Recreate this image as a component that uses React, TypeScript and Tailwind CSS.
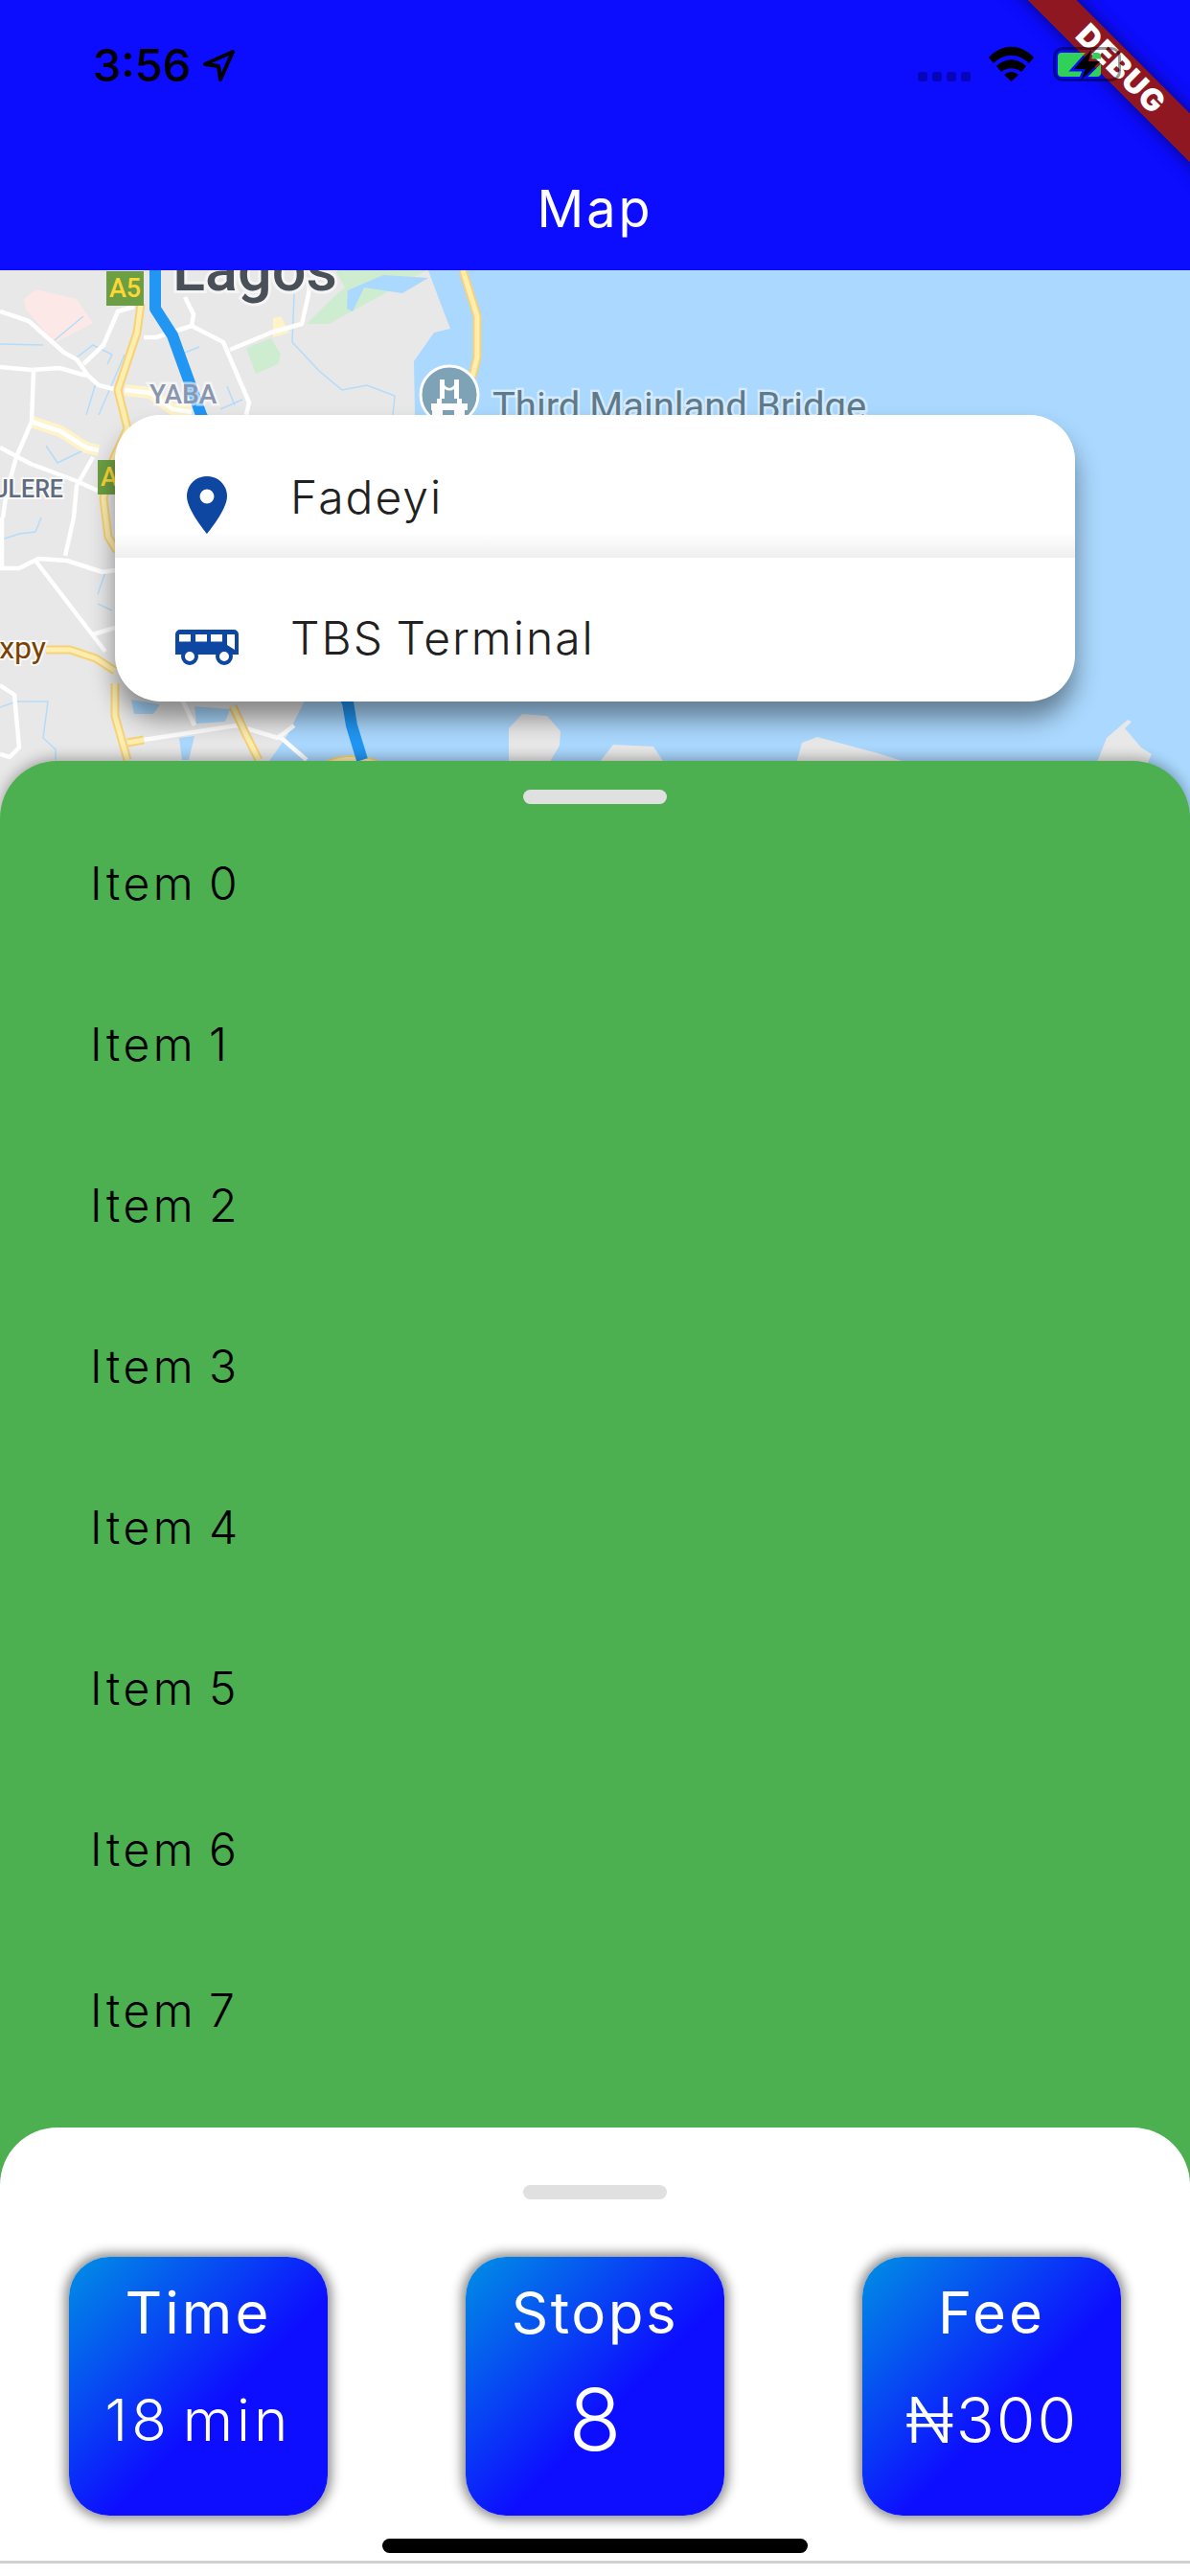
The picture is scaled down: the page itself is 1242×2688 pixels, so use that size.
import React from "react";

const font = "font-['Inter','Liberation_Sans',sans-serif]";

const whiteRoads = [
  "M0 325 L30 335 L67 368 L80 375 L92 392 L103 402 L123 407",
  "M0 383 L33 386 L62 384 L90 392",
  "M35 387 L33 440 L17 477 L7 513 L3 540",
  "M0 467 L32 484 L80 502 L102 512",
  "M87 380 L108 360 L123 325 L140 320",
  "M150 352 L163 352 L200 340 L233 357 L260 420 L257 433",
  "M200 340 L202 328 L193 310",
  "M240 365 L283 347 L315 338 L322 307 L323 293",
  "M97 477 L80 507 L77 540 L68 580",
  "M0 593 L20 593 L40 583 L70 585 L107 597 L120 595",
  "M37 585 L110 680",
  "M97 662 L120 655",
  "M0 715 L15 725 L20 780 L10 790 L0 787",
  "M150 772 L247 757 L290 770 L307 757",
  "M290 767 L320 793",
  "M190 730 L203 757",
  "M2 540 L2 593",
];

const streams = [
  "M307 307 L305 357 L333 387 L357 407 L383 402 L412 413 L410 433",
  "M57 355 L87 330",
  "M0 359 L45 360",
  "M90 433 L100 400",
  "M103 433 L130 370",
  "M80 373 L97 360 L117 370 L112 380",
  "M48 465 L60 483 L87 470",
  "M230 427 L253 417",
  "M237 403 L245 423",
  "M193 368 L208 362",
  "M2 563 L20 557 L37 555 L43 540",
  "M102 620 L110 597",
  "M102 630 L117 637",
  "M0 738 L17 732 L50 732 L45 770 L58 782 L58 793",
];

const yellowRoads = [
  "M147 317 L143 347 L123 407 L133 447 L118 480 L108 520 L113 560 L122 575",
  "M120 713 L120 747 L133 793",
  "M48 678 L73 678 L100 687 L120 700",
  "M243 737 L257 767 L270 793",
  "M133 775 L150 772",
  "M343 797 Q365 788 393 797",
  "M483 282 L498 330 L498 373 L493 393",
];

const MapBackground = () => (
  <svg viewBox="0 282 1242 572" className="absolute inset-0 w-full h-full">
    <rect x="0" y="282" width="1242" height="572" fill="#e8e8e8" />
    <path d="M350 282 L445 282 L400 307 L343 338 L320 338 L345 313 L360 300 Z" fill="#cdecd0" />
    <path d="M257 363 L283 353 L293 370 L290 380 L267 390 Z" fill="#cdecd0" />
    <path d="M25 312 L38 302 L80 312 L97 337 L57 358 L27 323 Z" fill="#fce8e6" />
    <path d="M285 332 L293 330 L302 347 L285 352 Z" fill="#fff4c8" />
    <path d="M363 303 L400 287 L447 290 L420 306 L380 300 L368 325 L362 322 Z" fill="#aad8fe" />
    <path d="M447 282 L460 317 L470 343 L453 347 L432 377 L433 433 L420 600 L317 733 L300 767 L277 800 L277 854 L1242 854 L1242 282 Z" fill="#aad8fe" />
    <path d="M137 730 L167 735 L160 745 L140 745 Z M203 737 L240 740 L235 753 L205 755 Z M187 770 L203 768 L197 793 L190 793 Z" fill="#aad8fe" />
    <path d="M531 800 L531 760 L545 745 L571 747 L585 763 L584 778 L571 800 Z" fill="#e8e8e8" />
    <path d="M622 800 L640 777 L682 779 L696 800 Z" fill="#e8e8e8" />
    <path d="M830 800 L837 775 L853 769 L916 786 L961 800 Z" fill="#e8e8e8" />
    <path d="M1143 800 L1155 770 L1177 751 L1181 753 L1174 760 L1191 780 L1202 787 L1196 800 Z" fill="#e8e8e8" />
    <g fill="none" stroke="#b3dcfc" strokeWidth="1.500">
      {streams.map((d) => <path key={d} d={d} />)}
    </g>
    <g fill="none" stroke="#fff4c8" strokeWidth="12" strokeLinejoin="round">
      <path d="M130 407 L157 410 L180 427 L200 430" />
      <path d="M33 440 L63 450 L90 467 L103 470" />
    </g>
    <g fill="none" stroke="#ffffff" strokeWidth="4.500" strokeLinejoin="round">
      {whiteRoads.map((d) => <path key={d} d={d} />)}
      <path d="M130 407 L157 410 L180 427 L200 430" />
      <path d="M33 440 L63 450 L90 467 L103 470" />
    </g>
    <g fill="none" stroke="#f6d27a" strokeWidth="9" strokeLinejoin="round">
      {yellowRoads.map((d) => <path key={d} d={d} />)}
    </g>
    <g fill="none" stroke="#feeeae" strokeWidth="5" strokeLinejoin="round">
      {yellowRoads.map((d) => <path key={d} d={d} />)}
    </g>
    <path d="M162 282 L162 322 L180 350 L210 433 L363 733 L367 757 L378 793" fill="none" stroke="#2196f3" strokeWidth="12" strokeLinejoin="round" />
    <rect x="111" y="283" width="39" height="36" fill="#6c9f43" />
    <text x="130.500" y="310" textAnchor="middle" fontSize="27" fontWeight="500" fill="#fdd835" fontFamily="Roboto, sans-serif">A5</text>
    <rect x="102" y="480" width="18" height="36" fill="#6c9f43" />
    <text x="105" y="507" fontSize="27" fontWeight="500" fill="#fdd835" fontFamily="Roboto, sans-serif">A</text>
    <text x="180" y="303" fontSize="63" fontWeight="500" fill="#4a5058" stroke="#f5f5f5" strokeWidth="6" paintOrder="stroke" fontFamily="Roboto, sans-serif">Lagos</text>
    <text x="156" y="421" fontSize="28" fontWeight="500" fill="#8a96ae" stroke="#ffffff" strokeOpacity="0.6" strokeWidth="5" paintOrder="stroke" fontFamily="Roboto, sans-serif">YABA</text>
    <text x="66" y="519" textAnchor="end" fontSize="25" fontWeight="500" fill="#5f6b7e" stroke="#ffffff" strokeOpacity="0.8" strokeWidth="4" paintOrder="stroke" fontFamily="Roboto, sans-serif">ULERE</text>
    <text x="48" y="687" textAnchor="end" fontSize="32" fill="#7b3f00" stroke="#ffffff" strokeOpacity="0.8" strokeWidth="4" paintOrder="stroke" fontFamily="Roboto, sans-serif">Expy</text>
    <circle cx="469" cy="412" r="30" fill="#7ea3b7" stroke="#ffffff" strokeWidth="3" />
    <path d="M450 421 h6 v-5 h5 v5 h16 v-5 h5 v5 h6 v7 h-3 v7 h-11 v-7 h-12 v7 h-11 v-7 h-1 Z M459 396 h5 v6 q5 6 10 0 v-6 h5 v20 h-5 v-10 q-5 3 -10 0 v10 h-5 Z" fill="#ffffff" />
    <text x="514" y="438" fontSize="40" fill="#5f7a8a" stroke="#ffffff" strokeOpacity="0.5" strokeWidth="5" paintOrder="stroke" fontFamily="Roboto, sans-serif">Third Mainland Bridge</text>
  </svg>
);

const PinIcon = () => (
  <svg width="42" height="60" viewBox="0 0 42 60" className="block">
    <path fillRule="evenodd" d="M21 0C9 0 0 9 0 21c0 14 21 39 21 39s21-25 21-39C42 9 33 0 21 0Zm0 13.500a7.500 7.500 0 1 1 0 15 7.500 7.500 0 0 1 0-15Z" fill="#0d47a1" />
  </svg>
);

const BusIcon = () => (
  <svg width="66" height="37" viewBox="0 0 66 37" className="block">
    <path fillRule="evenodd" d="M5 0h56a5 5 0 0 1 5 5v21H0V5a5 5 0 0 1 5-5Zm-1 5v7.500h12V5Zm17 0v7.500h12V5Zm16 0v7.500h12V5Zm17 0v11l8 5V5Z" fill="#0d47a1" />
    <circle cx="15" cy="28" r="7" fill="#ffffff" stroke="#0d47a1" strokeWidth="4" />
    <circle cx="51" cy="28" r="7" fill="#ffffff" stroke="#0d47a1" strokeWidth="4" />
  </svg>
);

const StatusIcons = () => (
  <svg width="226" height="40" viewBox="958 47 226 40" className="absolute left-[958px] top-[47px]">
    {[958, 973, 988, 1003].map((x) => (
      <rect key={x} x={x} y="75" width="10" height="10" rx="3" fill="#0606b8" />
    ))}
    <path d="M1032 60 C1046 45 1065 45 1079 60 L1074 66 C1063 55 1048 55 1037 66 Z M1040 69 C1049 60 1062 60 1071 69 L1066 75 C1060 70 1051 70 1045 75 Z M1048 78 C1053 74 1058 74 1063 78 L1055.500 85 Z" fill="#000000" />
    <mask id="bolt">
      <rect x="1100" y="50" width="70" height="36" fill="#ffffff" />
      <path d="M1139 52 L1121 72 L1133 72 L1128 84 L1148 64 L1136 64 Z" fill="#000000" stroke="#000000" strokeWidth="5" />
    </mask>
    <rect x="1100.500" y="50.500" width="68" height="33" rx="9" fill="none" stroke="#000000" strokeOpacity="0.4" strokeWidth="3" />
    <rect x="1104" y="55" width="45" height="25" rx="4" fill="#30d158" mask="url(#bolt)" />
    <path d="M1139 52 L1121 72 L1133 72 L1128 84 L1148 64 L1136 64 Z" fill="#000000" />
  </svg>
);

const DebugBanner = () => (
  <div className="absolute top-[144px] left-[1242px] w-0 h-0 z-10">
    <div className="absolute left-[-200px] top-[-18px] w-[400px] h-[36px] -translate-x-[72px] -translate-y-[72px] rotate-45 flex items-center justify-center bg-[#8f1722] shadow-[0_0_18px_rgba(0,0,0,0.5)]">
      <span className="font-['Inter',sans-serif] text-[32px] font-black text-white tracking-[1px] leading-none">DEBUG</span>
    </div>
  </div>
);

const Stat = ({ label, value, valueClass, labelClass }: { label: string; value: string; valueClass: string; labelClass: string }) => (
  <div className={`${font} w-[270px] h-[270px] rounded-[42px] bg-[linear-gradient(135deg,#0090e4_0%,#0d0dff_58%)] shadow-[0_0_12px_4px_rgba(0,0,0,0.45)] text-white flex flex-col items-center font-normal`}>
    <span className={`mt-[22px] h-[72px] text-[60px] leading-[72px] ${labelClass}`}>{label}</span>
    <span className={valueClass}>{value}</span>
  </div>
);

export default function App() {
  const items = [0, 1, 2, 3, 4, 5, 6, 7];
  return (
    <div className={`${font} w-[1242px] h-[2688px] overflow-hidden flex flex-col bg-white`}>
      <header className="relative h-[282px] shrink-0 overflow-hidden bg-[#0c0cff]">
        <DebugBanner />
        <div className="relative z-20 h-[186px]">
          <div className="flex items-center gap-[12px] pl-[97px] pt-[40px]">
            <span className="text-[47px] leading-[56px] font-medium text-black">3:56</span>
            <svg width="36" height="36" viewBox="0 0 36 36" fill="none" stroke="#000000" strokeWidth="4" strokeLinejoin="round">
              <path d="M32 4 L3 17 L17 19 L19 33 Z" />
            </svg>
          </div>
          <StatusIcons />
        </div>
        <h1 className="relative text-center text-[54px] leading-[64px] text-white font-normal tracking-[3px]">Map</h1>
      </header>

      <section className="relative h-[572px] shrink-0">
        <MapBackground />
        <div className="absolute left-[120px] top-[151px] w-[1002px] h-[299px] rounded-[48px] bg-white shadow-[0_18px_26px_rgba(0,0,0,0.42)] overflow-hidden text-[48px] font-light text-[#212121] tracking-[2px] [word-spacing:-3px]">
          <div className="h-[149px] flex items-start pl-[75px] bg-[linear-gradient(to_bottom,#ffffff_82%,#efefef_100%)]">
            <div className="mt-[64px] mr-[66px]"><PinIcon /></div>
            <span className="mt-[57px] leading-[58px]">Fadeyi</span>
          </div>
          <div className="h-[150px] flex items-start pl-[63px]">
            <div className="mt-[75px] mr-[54px]"><BusIcon /></div>
            <span className="mt-[55px] leading-[58px]">TBS Terminal</span>
          </div>
        </div>
      </section>

      <section className="relative z-10 -mt-[60px] h-[1486px] shrink-0 rounded-t-[60px] bg-[#4caf50] shadow-[0_-3px_14px_rgba(0,0,0,0.3)]">
        <div className="mx-auto mt-[30px] w-[150px] h-[15px] rounded-full bg-[#e0e0e0]" />
        <ul className="-mt-px pl-[94px] text-[48px] font-light text-black tracking-[3.5px] [word-spacing:-4px]">
          {items.map((i) => (
            <li key={i} className="h-[168px] flex items-center">Item {i}</li>
          ))}
        </ul>
      </section>

      <section className="relative z-20 -mt-[60px] flex-1 rounded-t-[60px] bg-white">
        <div className="mx-auto mt-[60px] w-[150px] h-[15px] rounded-full bg-[#e0e0e0]" />
        <div className="mt-[60px] px-[72px] flex justify-between">
          <Stat label="Time" labelClass="tracking-[3px]" value="18 min" valueClass="mt-[40px] h-[72px] text-[60px] leading-[72px] font-light tracking-[4px] [word-spacing:-8px]" />
          <Stat label="Stops" labelClass="tracking-[2.5px]" value="8" valueClass="mt-[22px] h-[108px] text-[90px] leading-[108px] font-light" />
          <Stat label="Fee" labelClass="tracking-[3px]" value="₦300" valueClass="mt-[38px] h-[76px] text-[66px] leading-[76px] font-light tracking-[2px]" />
        </div>
        <div className="mx-auto mt-[24px] w-[444px] h-[15px] rounded-full bg-black" />
        <div className="mt-[8px] h-[3px] bg-[#d0d0d0]" />
      </section>
    </div>
  );
}
